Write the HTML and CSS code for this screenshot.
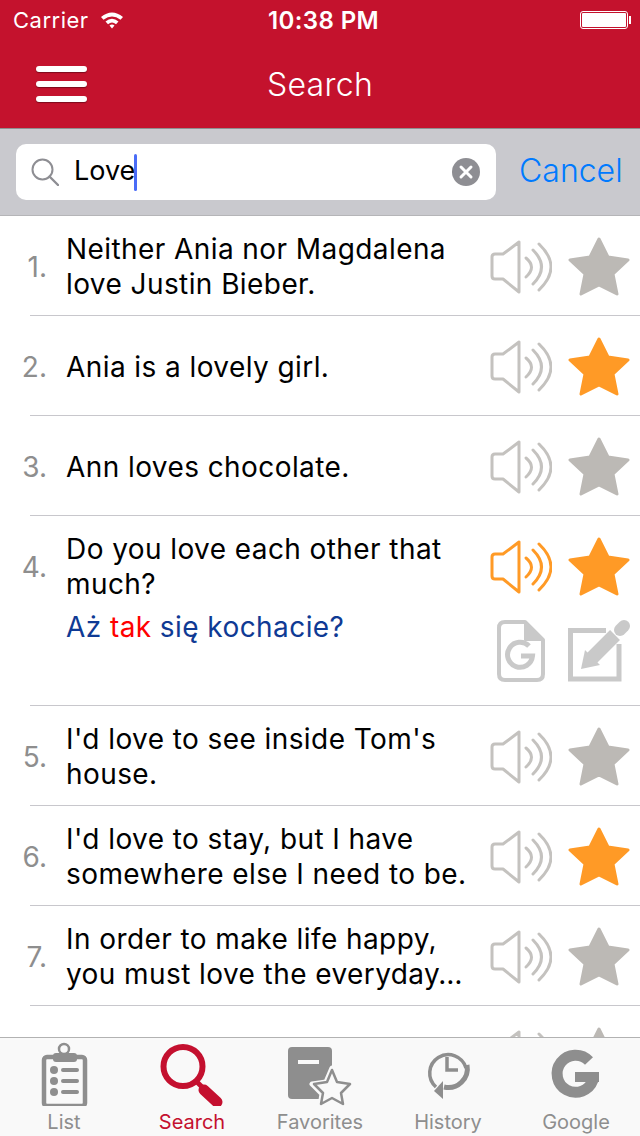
FILE: index.html
```html
<!DOCTYPE html>
<html lang="en">
<head>
  <meta charset="UTF-8" />
  <title>Search</title>
  <link rel="stylesheet" href="styles.css">
</head>
<body>

  <svg class="defs" aria-hidden="true">
    <symbol id="speaker" viewBox="0 0 62 54">
      <g fill="none" stroke="currentColor" stroke-width="3" stroke-linecap="round" stroke-linejoin="round">
        <path d="M13 14 L29 2 V52 L13 39 H5 Q2 39 2 36 V17 Q2 14 5 14 Z" />
        <path d="M36 18 Q47 27 36 37" />
        <path d="M43 10 Q60 27 43 44" />
        <path d="M49 4 Q73 27 49 50" />
      </g>
    </symbol>
    <symbol id="star" viewBox="0 0 62 60">
      <path fill="currentColor" stroke="currentColor" stroke-width="3" stroke-linejoin="round" d="M31 2 L40 20 L60 23 L45 37 L49 57 L31 48 L13 57 L17 37 L2 23 L22 20 Z" />
    </symbol>
  </svg>

  <div class="header">
    <div class="status">
      <div class="status-left">
        <span>Carrier</span>
        <svg class="wifi" viewBox="0 0 24 18">
          <path d="M1 6 Q12 -3 23 6 L20.5 8.8 Q12 2 3.5 8.8 Z" />
          <path d="M5.5 10.5 Q12 5 18.5 10.5 L16 13.2 Q12 10 8 13.2 Z" />
          <path d="M9.5 14.5 Q12 12.6 14.5 14.5 L12 17.5 Z" />
        </svg>
      </div>
      <div class="clock">10:38 PM</div>
      <div class="battery"><div class="battery-fill"></div></div>
    </div>
    <div class="nav">
      <div class="burger"><span></span><span></span><span></span></div>
      <div class="title">Search</div>
    </div>
  </div>

  <div class="searchbar">
    <div class="field">
      <svg class="mag" viewBox="0 0 28 28">
        <circle cx="11.5" cy="11.5" r="10" fill="none" stroke="currentColor" stroke-width="2" />
        <path d="M18.5 18.5 L27 27" fill="none" stroke="currentColor" stroke-width="2.4" stroke-linecap="round" />
      </svg>
      <div class="query">Love</div>
      <div class="caret"></div>
      <svg class="clear" viewBox="0 0 28 28">
        <circle cx="14" cy="14" r="14" fill="#8e8e93" />
        <path d="M9 9 L19 19 M19 9 L9 19" stroke="#fff" stroke-width="3" stroke-linecap="round" />
      </svg>
    </div>
    <div class="cancel">Cancel</div>
  </div>

  <div class="list">
    <div class="row">
      <div class="num">1.</div>
      <div class="text">Neither Ania nor Magdalena love Justin Bieber.</div>
      <div class="acts">
        <div class="act-line">
          <svg class="speaker"><use href="#speaker" /></svg>
          <svg class="star"><use href="#star" /></svg>
        </div>
      </div>
    </div>
    <div class="row">
      <div class="num">2.</div>
      <div class="text">Ania is a lovely girl.</div>
      <div class="acts">
        <div class="act-line">
          <svg class="speaker"><use href="#speaker" /></svg>
          <svg class="star on"><use href="#star" /></svg>
        </div>
      </div>
    </div>
    <div class="row">
      <div class="num">3.</div>
      <div class="text">Ann loves chocolate.</div>
      <div class="acts">
        <div class="act-line">
          <svg class="speaker"><use href="#speaker" /></svg>
          <svg class="star"><use href="#star" /></svg>
        </div>
      </div>
    </div>
    <div class="row open">
      <div class="num">4.</div>
      <div class="text">
        Do you love each other that much?
        <div class="translation">Aż <span class="hit">tak</span> się kochacie?</div>
      </div>
      <div class="acts">
        <div class="act-line">
          <svg class="speaker on"><use href="#speaker" /></svg>
          <svg class="star on"><use href="#star" /></svg>
        </div>
        <div class="act-line extra">
          <div class="doc-cell">
            <svg class="doc" viewBox="0 0 48 62">
              <path d="M8 2 H28 L46 20 V54 Q46 60 40 60 H8 Q2 60 2 54 V8 Q2 2 8 2 Z" fill="none" stroke="currentColor" stroke-width="4" stroke-linejoin="round" />
              <path d="M28 2 V20 H46 Z" fill="currentColor" stroke="currentColor" stroke-width="2" stroke-linejoin="round" />
              <path d="M32 26 A12.5 12.5 0 1 0 35.5 36 H24" fill="none" stroke="currentColor" stroke-width="5" />
            </svg>
          </div>
          <svg class="edit" viewBox="0 0 62 62">
            <path d="M38 10.5 H2.5 V59 H51 V24" fill="none" stroke="currentColor" stroke-width="5" />
            <path d="M24 38 L47 15" stroke="currentColor" stroke-width="14" />
            <path d="M52 10 L56 6" stroke="currentColor" stroke-width="12" stroke-linecap="round" />
            <path d="M13 49 L17 30 L32 45 Z" fill="currentColor" />
          </svg>
        </div>
      </div>
    </div>
    <div class="row">
      <div class="num">5.</div>
      <div class="text">I'd love to see inside Tom's house.</div>
      <div class="acts">
        <div class="act-line">
          <svg class="speaker"><use href="#speaker" /></svg>
          <svg class="star"><use href="#star" /></svg>
        </div>
      </div>
    </div>
    <div class="row">
      <div class="num">6.</div>
      <div class="text">I'd love to stay, but I have somewhere else I need to be.</div>
      <div class="acts">
        <div class="act-line">
          <svg class="speaker"><use href="#speaker" /></svg>
          <svg class="star on"><use href="#star" /></svg>
        </div>
      </div>
    </div>
    <div class="row">
      <div class="num">7.</div>
      <div class="text">In order to make life happy, you must love the everyday…</div>
      <div class="acts">
        <div class="act-line">
          <svg class="speaker"><use href="#speaker" /></svg>
          <svg class="star"><use href="#star" /></svg>
        </div>
      </div>
    </div>
    <div class="row">
      <div class="num"></div>
      <div class="text"></div>
      <div class="acts">
        <div class="act-line">
          <svg class="speaker"><use href="#speaker" /></svg>
          <svg class="star"><use href="#star" /></svg>
        </div>
      </div>
    </div>
  </div>

  <div class="tabbar">
    <div class="tab">
      <svg class="tab-icon" viewBox="0 0 128 66">
        <rect x="44" y="17" width="41" height="49" rx="3" fill="none" stroke="currentColor" stroke-width="4.5" />
        <circle cx="64" cy="9" r="5" fill="none" stroke="currentColor" stroke-width="2.5" />
        <rect x="53" y="13" width="24" height="9" rx="3" fill="currentColor" />
        <circle cx="54" cy="30" r="4" fill="currentColor" />
        <circle cx="54" cy="41" r="4" fill="currentColor" />
        <circle cx="54" cy="52" r="4" fill="currentColor" />
        <path d="M63 30 H77 M63 41 H77 M63 52 H77" stroke="currentColor" stroke-width="4" stroke-linecap="round" />
      </svg>
      <div class="tab-label">List</div>
    </div>
    <div class="tab active">
      <svg class="tab-icon" viewBox="0 0 128 66">
        <circle cx="55" cy="26.500" r="19.500" fill="none" stroke="currentColor" stroke-width="6" />
        <path d="M68 41 L75 48" stroke="currentColor" stroke-width="5" />
        <path d="M76 50 L89 62" stroke="currentColor" stroke-width="11" stroke-linecap="round" />
      </svg>
      <div class="tab-label">Search</div>
    </div>
    <div class="tab">
      <svg class="tab-icon" viewBox="0 0 128 66">
        <path d="M36 7 H72 Q76 7 76 11 V55 Q76 59 72 59 H36 Q32 59 32 55 V11 Q32 7 36 7 Z" fill="currentColor" />
        <rect x="42" y="20" width="21" height="4" fill="#f9f9f9" />
        <path d="M76 28 L82 42 L96 44 L86 54 L88 66 L76 60 L64 66 L66 54 L56 44 L70 42 Z" fill="#f9f9f9" stroke="#f9f9f9" stroke-width="5" stroke-linejoin="round" />
        <path d="M76 30 L81 42 L94 44 L85 53 L87 64 L76 58 L65 64 L67 53 L58 44 L71 42 Z" fill="#f9f9f9" stroke="currentColor" stroke-width="2.500" stroke-linejoin="round" />
      </svg>
      <div class="tab-label">Favorites</div>
    </div>
    <div class="tab">
      <svg class="tab-icon" viewBox="0 0 128 66">
        <path d="M52 47 A18.500 18.500 0 1 1 82 28" fill="none" stroke="currentColor" stroke-width="3.500" />
        <path d="M83 25 A19 19 0 0 1 60 47" fill="none" stroke="currentColor" stroke-width="5" />
        <path d="M59 41 L50 51 L59 59 Z" fill="currentColor" />
        <path d="M63 17 V30 H74" fill="none" stroke="currentColor" stroke-width="3.500" />
      </svg>
      <div class="tab-label">History</div>
    </div>
    <div class="tab">
      <svg class="tab-icon" viewBox="0 0 128 66">
        <path d="M77 21 A18.500 18.500 0 1 0 81 40" fill="none" stroke="currentColor" stroke-width="11" />
        <rect x="63" y="32" width="24" height="10" fill="currentColor" />
      </svg>
      <div class="tab-label">Google</div>
    </div>
  </div>

</body>
</html>
```

FILE: styles.css
```css
* {
  box-sizing: border-box;
  margin: 0;
  padding: 0;
}

body {
  font-family: 'Inter', sans-serif;
  background-color: #ffffff;
  display: flex;
  flex-direction: column;
  height: 100vh;
  overflow: hidden;
}

.defs {
  display: none;
}

.header {
  background-color: #c4122d;
  color: white;
  height: 129px;
  flex-shrink: 0;
  border-bottom: 1px solid #8f8f8f;
}

.status {
  height: 40px;
  padding: 0 12px 0 13px;
  display: flex;
  align-items: center;
  justify-content: space-between;
  font-size: 22px;
  letter-spacing: 0.5px;
}

.status-left {
  display: flex;
  align-items: center;
  gap: 11px;
  width: 166px;
}

.wifi {
  width: 24px;
  height: 18px;
  fill: white;
}

.clock {
  font-size: 24px;
  font-weight: 600;
  letter-spacing: 0.4px;
}

.battery {
  width: 48px;
  height: 18px;
  border: 1px solid white;
  border-radius: 3px;
  padding: 1px;
  margin-left: 112px;
  position: relative;
}

.battery::after {
  content: "";
  position: absolute;
  right: -4px;
  top: 4px;
  width: 2px;
  height: 8px;
  background-color: white;
}

.battery-fill {
  height: 100%;
  background-color: white;
  border-radius: 1px;
}

.nav {
  height: 88px;
  padding: 0 36px;
  display: flex;
  align-items: center;
  position: relative;
}

.burger {
  width: 51px;
  display: flex;
  flex-direction: column;
  gap: 9px;
}

.burger span {
  height: 6px;
  background-color: white;
  border-radius: 3px;
  box-shadow: 0 1px 1px #7d0a1c;
}

.title {
  flex: 1;
  margin-right: 51px;
  text-align: center;
  font-size: 32px;
  font-weight: 300;
  letter-spacing: 0.3px;
}

.searchbar {
  height: 87px;
  flex-shrink: 0;
  background-color: #c9c9ce;
  border-bottom: 1px solid #b5b5b8;
  padding: 15px 17px 15px 16px;
  display: flex;
  align-items: flex-start;
  gap: 23px;
}

.field {
  width: 480px;
  height: 56px;
  background-color: white;
  border-radius: 10px;
  display: flex;
  align-items: center;
  padding: 0 16px 0 15px;
}

.mag {
  width: 28px;
  height: 28px;
  color: #8e8e93;
  margin-right: 16px;
}

.query {
  font-size: 27px;
  line-height: 32px;
  color: black;
  margin: -2px 0 0 -1px;
}

.caret {
  width: 3px;
  height: 37px;
  background-color: #4a6cf7;
  border-radius: 2px;
  margin-left: -1px;
}

.clear {
  width: 28px;
  height: 28px;
  margin-left: auto;
}

.cancel {
  font-size: 32px;
  font-weight: 300;
  color: #007aff;
  line-height: 54px;
}

.list {
  flex: 1;
  min-height: 0;
  overflow: hidden;
}

.row {
  display: flex;
  align-items: flex-start;
  height: 100px;
  position: relative;
}

.row::after {
  content: "";
  position: absolute;
  left: 30px;
  right: 0;
  bottom: 0;
  height: 1px;
  background-color: #c8c7cc;
}

.row.open {
  height: 190px;
}

.num {
  width: 47px;
  height: 100px;
  margin-right: 20px;
  flex-shrink: 0;
  text-align: right;
  font-size: 28px;
  line-height: 102px;
  color: #8e8e8e;
}

.text {
  flex: 1;
  min-height: 100px;
  padding: 16px 18px 14px 0;
  display: flex;
  flex-direction: column;
  justify-content: center;
  font-size: 28px;
  line-height: 35px;
  letter-spacing: 0.42px;
  color: black;
  margin-left: -1px;
}

.open .text {
  display: block;
}

.translation {
  margin-top: 8px;
  color: #0f3a94;
}

.hit {
  color: #ff0000;
}

.acts {
  width: 150px;
  flex-shrink: 0;
}

.act-line {
  height: 100px;
  padding: 2px 10px 0 0;
  display: flex;
  align-items: center;
  justify-content: flex-end;
  gap: 16px;
}

.act-line.extra {
  height: 62px;
  margin-top: 4px;
  padding-top: 0;
}

.speaker {
  width: 62px;
  height: 54px;
  color: #c4c2bf;
}

.star {
  width: 62px;
  height: 60px;
  color: #bcb9b5;
}

.speaker.on,
.star.on {
  color: #ff9a26;
}

.doc-cell {
  width: 62px;
  display: flex;
  justify-content: center;
}

.doc {
  width: 48px;
  height: 62px;
  color: #c9c9c9;
}

.edit {
  width: 62px;
  height: 62px;
  color: #c9c9c9;
}

.tabbar {
  height: 99px;
  flex-shrink: 0;
  background-color: #f9f9f9;
  border-top: 1px solid #b2b2b2;
  padding-top: 2px;
  display: flex;
  position: relative;
}

.tab {
  width: 128px;
  display: flex;
  flex-direction: column;
  align-items: center;
  gap: 4px;
  color: #8e8e8e;
}

.tab.active {
  color: #c4102f;
}

.tab-icon {
  width: 128px;
  height: 66px;
  display: block;
}

.tab-label {
  font-size: 20px;
  line-height: 24px;
}
```
